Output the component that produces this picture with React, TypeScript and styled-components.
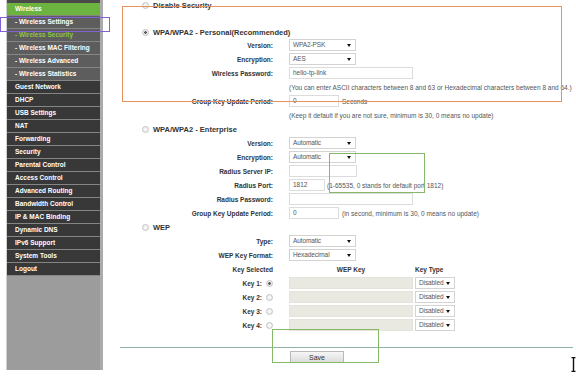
import React from 'react';
import styled, { createGlobalStyle } from 'styled-components';

const GlobalStyle = createGlobalStyle`
  html, body {
    margin: 0;
    padding: 0;
    background: #ffffff;
  }
  body {
    width: 576px;
    height: 377px;
    overflow: hidden;
    font-family: "Liberation Sans", Arial, sans-serif;
  }
`;

const Page = styled.div`
  position: relative;
  display: flex;
  height: 370px;
  padding-left: 6px;
`;

const Sidebar = styled.nav`
  width: 93px;
  display: flex;
  flex-direction: column;
  padding-top: 3px;
  background: #9c9c9c;
  border-left: 1px solid #cfcfcf;
  border-right: 3px solid #ababab;
  box-shadow: inset 0 3px 0 #4a4a4a;
`;

type NavKind = 'active' | 'sub' | 'main';

const NavItem = styled.div<{ $kind: NavKind; $current?: boolean }>`
  height: 12px;
  line-height: 12px;
  padding-left: 8px;
  border-bottom: 1px solid #858585;
  font-size: 6.5px;
  font-weight: bold;
  white-space: nowrap;
  color: ${({ $current }) => ($current ? '#8dc641' : '#ffffff')};
  background: ${({ $kind }) =>
    $kind === 'active' ? '#6cb43f' : $kind === 'sub' ? '#5d5d5d' : '#383838'};
`;

const Main = styled.main`
  flex: 1;
  display: flex;
  flex-direction: column;
  color: #555;
`;

const SectionHead = styled.div<{ $top?: number; $height?: number }>`
  display: flex;
  align-items: center;
  gap: 4px;
  height: ${({ $height }) => $height ?? 14}px;
  margin-top: ${({ $top }) => $top ?? 0}px;
  padding-left: 39px;
  font-size: 7.5px;
  font-weight: bold;
  color: #333;
`;

const Radio = styled.span<{ $checked?: boolean }>`
  box-sizing: border-box;
  width: 7px;
  height: 7px;
  border-radius: 50%;
  border: 1px solid #c4c4c4;
  background: radial-gradient(circle, ${({ $checked }) => ($checked ? '#555 0 1.2px, ' : '')}#f6f6f6 1.5px, #dadada 100%);
  flex-shrink: 0;
`;

const Row = styled.div`
  display: grid;
  grid-template-columns: 170px 1fr;
  column-gap: 16px;
  align-items: center;
  height: 14px;
`;

const Label = styled.div`
  display: flex;
  justify-content: flex-end;
  align-items: center;
  gap: 4px;
  font-size: 6.5px;
  font-weight: bold;
  color: #333;
  white-space: nowrap;
`;

const Value = styled.div`
  display: flex;
  align-items: center;
  gap: 2px;
  font-size: 6.5px;
  white-space: nowrap;
`;

const Hint = styled.span<{ $shift?: number }>`
  margin-left: ${({ $shift }) => $shift ?? 0}px;
  font-size: 6.5px;
  color: #555;
`;

const SelectBox = styled.div<{ $width: number }>`
  position: relative;
  box-sizing: border-box;
  width: ${({ $width }) => $width}px;
  height: 12px;
  line-height: 10px;
  padding-left: 3px;
  border: 1px solid #d3d3d3;
  background: #fff;
  font-size: 6.5px;
  letter-spacing: -0.1px;
  color: #555;

  &::after {
    content: '';
    position: absolute;
    right: 4px;
    top: 4px;
    border-left: 2px solid transparent;
    border-right: 2px solid transparent;
    border-top: 3px solid #111;
  }
`;

const TextBox = styled.div<{ $width: number; $disabled?: boolean }>`
  box-sizing: border-box;
  width: ${({ $width }) => $width}px;
  height: 12px;
  line-height: 10px;
  padding-left: 3px;
  border: 1px solid ${({ $disabled }) => ($disabled ? '#e4e4dc' : '#dcdcdc')};
  background: ${({ $disabled }) => ($disabled ? '#e9e9e1' : '#fff')};
  font-size: 6.5px;
  color: #555;
`;

const ColumnHead = styled.span<{ $width?: number }>`
  width: ${({ $width }) => ($width ? `${$width}px` : 'auto')};
  text-align: center;
  font-size: 6.5px;
  font-weight: bold;
  color: #333;
`;

const Divider = styled.hr`
  width: 453px;
  height: 1px;
  margin: 15px 0 0 17px;
  border: none;
  background: #91b3a6;
`;

const SaveRow = styled.div`
  display: grid;
  grid-template-columns: 170px 1fr;
  column-gap: 17px;
  margin-top: 3px;
`;

const SaveButton = styled.button`
  box-sizing: border-box;
  width: 54px;
  height: 12px;
  padding: 0;
  border: 1px solid #b9b9b9;
  background: linear-gradient(#f6f6f6, #dcdcdc);
  font-family: inherit;
  font-size: 7px;
  color: #333;
`;

const Mark = styled.div<{ $x: number; $y: number; $w: number; $h: number; $color: string; $line?: number }>`
  position: absolute;
  left: ${({ $x }) => $x}px;
  top: ${({ $y }) => $y}px;
  width: ${({ $w }) => $w}px;
  height: ${({ $h }) => $h}px;
  box-sizing: border-box;
  border: ${({ $line }) => $line ?? 1.5}px solid ${({ $color }) => $color};
  pointer-events: none;
`;

const Cursor = styled.svg`
  position: absolute;
  left: 571px;
  top: 357px;
`;

const navItems: { text: string; kind: NavKind; current?: boolean }[] = [
  { text: 'Wireless', kind: 'active' },
  { text: '- Wireless Settings', kind: 'sub' },
  { text: '- Wireless Security', kind: 'sub', current: true },
  { text: '- Wireless MAC Filtering', kind: 'sub' },
  { text: '- Wireless Advanced', kind: 'sub' },
  { text: '- Wireless Statistics', kind: 'sub' },
  { text: 'Guest Network', kind: 'main' },
  { text: 'DHCP', kind: 'main' },
  { text: 'USB Settings', kind: 'main' },
  { text: 'NAT', kind: 'main' },
  { text: 'Forwarding', kind: 'main' },
  { text: 'Security', kind: 'main' },
  { text: 'Parental Control', kind: 'main' },
  { text: 'Access Control', kind: 'main' },
  { text: 'Advanced Routing', kind: 'main' },
  { text: 'Bandwidth Control', kind: 'main' },
  { text: 'IP & MAC Binding', kind: 'main' },
  { text: 'Dynamic DNS', kind: 'main' },
  { text: 'IPv6 Support', kind: 'main' },
  { text: 'System Tools', kind: 'main' },
  { text: 'Logout', kind: 'main' },
];

const FieldRow: React.FC<{ label: React.ReactNode; children?: React.ReactNode }> = ({ label, children }) => (
  <Row>
    <Label>{label}</Label>
    <Value>{children}</Value>
  </Row>
);

const App: React.FC = () => {
  return (
    <>
      <GlobalStyle />
      <Page>
        <Sidebar>
          {navItems.map((item) => (
            <NavItem key={item.text} $kind={item.kind} $current={item.current}>
              {item.text}
            </NavItem>
          ))}
        </Sidebar>

        <Main>
          <SectionHead $height={10}>
            <Radio />
            Disable Security
          </SectionHead>

          <SectionHead $top={17} $height={11}>
            <Radio $checked />
            WPA/WPA2 - Personal(Recommended)
          </SectionHead>
          <FieldRow label="Version:">
            <SelectBox $width={67}>WPA2-PSK</SelectBox>
          </FieldRow>
          <FieldRow label="Encryption:">
            <SelectBox $width={67}>AES</SelectBox>
          </FieldRow>
          <FieldRow label="Wireless Password:">
            <TextBox $width={124}>hello-tp-link</TextBox>
          </FieldRow>
          <FieldRow label="">
            <Hint>(You can enter ASCII characters between 8 and 63 or Hexadecimal characters between 8 and 64.)</Hint>
          </FieldRow>
          <FieldRow label="Group Key Update Period:">
            <TextBox $width={50}>0</TextBox>
            <Hint $shift={1}>Seconds</Hint>
          </FieldRow>
          <FieldRow label="">
            <Hint>(Keep it default if you are not sure, minimum is 30, 0 means no update)</Hint>
          </FieldRow>

          <SectionHead>
            <Radio />
            WPA/WPA2 - Enterprise
          </SectionHead>
          <FieldRow label="Version:">
            <SelectBox $width={67}>Automatic</SelectBox>
          </FieldRow>
          <FieldRow label="Encryption:">
            <SelectBox $width={67}>Automatic</SelectBox>
          </FieldRow>
          <FieldRow label="Radius Server IP:">
            <TextBox $width={68} />
          </FieldRow>
          <FieldRow label="Radius Port:">
            <TextBox $width={36}>1812</TextBox>
            <Hint>(1-65535, 0 stands for default port 1812)</Hint>
          </FieldRow>
          <FieldRow label="Radius Password:">
            <TextBox $width={124} />
          </FieldRow>
          <FieldRow label="Group Key Update Period:">
            <TextBox $width={50}>0</TextBox>
            <Hint $shift={1}>(in second, minimum is 30, 0 means no update)</Hint>
          </FieldRow>

          <SectionHead>
            <Radio />
            WEP
          </SectionHead>
          <FieldRow label="Type:">
            <SelectBox $width={67}>Automatic</SelectBox>
          </FieldRow>
          <FieldRow label="WEP Key Format:">
            <SelectBox $width={67}>Hexadecimal</SelectBox>
          </FieldRow>
          <FieldRow label="Key Selected">
            <ColumnHead $width={124}>WEP Key</ColumnHead>
            <ColumnHead>Key Type</ColumnHead>
          </FieldRow>
          {[1, 2, 3, 4].map((n) => (
            <FieldRow
              key={n}
              label={
                <>
                  Key {n}:
                  <Radio $checked={n === 1} />
                </>
              }
            >
              <TextBox $width={124} $disabled />
              <SelectBox $width={40}>Disabled</SelectBox>
            </FieldRow>
          ))}

          <Divider />
          <SaveRow>
            <span />
            <SaveButton>Save</SaveButton>
          </SaveRow>
        </Main>

        <Mark $x={0} $y={17} $w={110} $h={15} $color="#8262d2" />
        <Mark $x={122} $y={6} $w={440} $h={96} $color="#e8935c" />
        <Mark $x={329} $y={153} $w={96} $h={40} $color="#84b86a" />
        <Mark $x={272} $y={329} $w={107} $h={34} $color="#84b86a" />
        <Cursor width="5" height="15" viewBox="0 0 5 15">
          <path d="M0.5 0.5h4M0.5 14.5h4M2.5 0.5v14" stroke="#111" strokeWidth="1.4" fill="none" />
        </Cursor>
      </Page>
    </>
  );
};

export default App;
